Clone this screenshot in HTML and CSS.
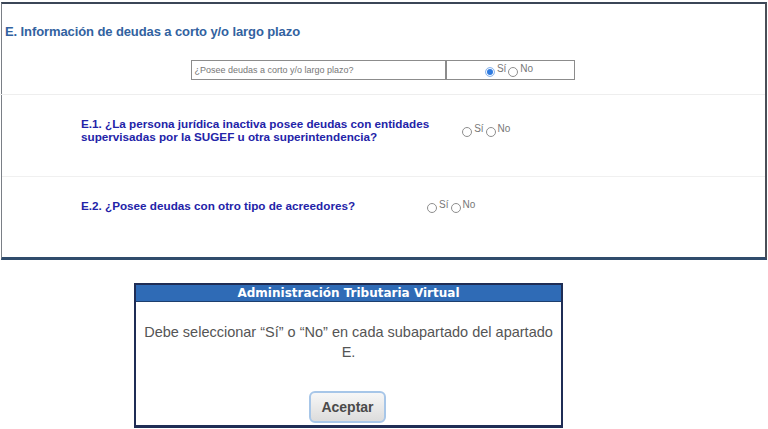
FILE: index.html
```html
<!DOCTYPE html>
<html lang="es">
<head>
    <meta charset="UTF-8">
    <title>Información de deudas</title>
    <link rel="stylesheet" href="styles.css">
</head>
<body>
    <div class="panel">
        <h1 class="section-title">E. Información de deudas a corto y/o largo plazo</h1>

        <div class="question-table">
            <div class="cell cell-label">¿Posee deudas a corto y/o largo plazo?</div>
            <div class="cell cell-options">
                <span class="radio checked"></span><span class="opt">Sí</span>
                <span class="radio"></span><span class="opt">No</span>
            </div>
        </div>

        <div class="sub-row sub-row-1">
            <p class="sub-text">E.1. ¿La persona jurídica inactiva posee deudas con entidades<br>supervisadas por la SUGEF u otra superintendencia?</p>
            <div class="options">
                <span class="radio"></span><span class="opt">Sí</span>
                <span class="radio"></span><span class="opt">No</span>
            </div>
        </div>

        <div class="sub-row sub-row-2">
            <p class="sub-text">E.2. ¿Posee deudas con otro tipo de acreedores?</p>
            <div class="options">
                <span class="radio"></span><span class="opt">Sí</span>
                <span class="radio"></span><span class="opt">No</span>
            </div>
        </div>
    </div>

    <div class="dialog">
        <div class="dialog-title">Administración Tributaria Virtual</div>
        <p class="dialog-msg">Debe seleccionar “Sí” o “No” en cada subapartado del apartado E.</p>
        <div class="dialog-actions">
            <button class="btn">Aceptar</button>
        </div>
    </div>
</body>
</html>
```

FILE: styles.css
```css
body {
    margin: 0;
    background: #fff;
    font-family: 'Liberation Sans', Arial, sans-serif;
}

.panel {
    margin: 2px 1px 0 1px;
    height: 253px;
    border-top: 2px solid #3b4657;
    border-left: 1px solid #7a7f86;
    border-right: 2px solid #4a4f57;
    border-bottom: 3px solid #304c6c;
    background: #fff;
}

.section-title {
    margin: 0;
    padding: 20px 0 0 3px;
    font-size: 13px;
    line-height: 16px;
    font-weight: bold;
    color: #3262a0;
    letter-spacing: -0.1px;
}

.question-table {
    display: flex;
    justify-content: center;
    margin: 20px 0 0 -2px;
    padding-bottom: 14px;
    border-bottom: 1px solid #eeeeee;
}

.cell {
    height: 18px;
    border: 1px solid #8c8c8c;
    font-size: 9px;
    color: #777;
    display: flex;
    align-items: center;
}

.cell-label {
    width: 250px;
    padding-left: 3px;
    border-right-width: 2px;
}

.cell-options {
    width: 127px;
    border-left: none;
    justify-content: center;
    font-size: 10px;
}

.sub-row {
    display: flex;
    padding-left: 79px;
    border-bottom: 1px solid #f0f0f0;
}

.sub-row-1 {
    height: 82px;
    padding-top: 22px;
    box-sizing: border-box;
}

.sub-row-2 {
    height: 79px;
    padding-top: 22px;
    box-sizing: border-box;
    border-bottom: none;
}

.sub-text {
    margin: 0;
    font-size: 11.7px;
    line-height: 13px;
    font-weight: bold;
    color: #2323a8;
}

.options {
    display: flex;
    align-items: center;
    height: 13px;
    margin-top: 6px;
    font-size: 10px;
    color: #777;
}

.sub-row-1 .options {
    margin-left: 33px;
}

.sub-row-2 .options {
    margin-left: 72px;
    margin-top: 0;
}

.radio {
    display: inline-block;
    width: 8px;
    height: 8px;
    border: 1px solid #8e8e8e;
    border-radius: 50%;
    background: #fff;
    margin-top: 4px;
    margin-right: 2px;
}

.radio.checked {
    background: #2f7be0;
    border-color: #8db6ec;
    box-shadow: inset 0 0 0 1px #fff;
    background-clip: padding-box;
}

.opt {
    margin-right: 2px;
    margin-top: -3px;
}

.dialog {
    margin: 23px 0 0 134px;
    width: 425px;
    height: 140px;
    border: 2px solid #1f2d55;
    border-bottom-width: 3px;
    background: #fff;
}

.dialog-title {
    height: 16px;
    background: #2f6bb6;
    border-bottom: 1px solid #1d3f6e;
    color: #fff;
    text-align: center;
    font-family: 'DejaVu Sans', Verdana, sans-serif;
    font-size: 12px;
    font-weight: bold;
    line-height: 16px;
}

.dialog-msg {
    margin: 0;
    padding: 20px 4px 0;
    text-align: center;
    font-size: 14.5px;
    line-height: 20px;
    color: #555;
}

.dialog-actions {
    display: flex;
    justify-content: center;
    padding-top: 29px;
}

.btn {
    width: 77px;
    height: 32px;
    border: 2px solid #a7c6e8;
    border-radius: 6px;
    background: linear-gradient(#f7f7f7, #dcdcdc);
    font-family: 'Liberation Sans', Arial, sans-serif;
    font-size: 14px;
    font-weight: bold;
    color: #4a4a4a;
    margin-left: -2px;
}
```
